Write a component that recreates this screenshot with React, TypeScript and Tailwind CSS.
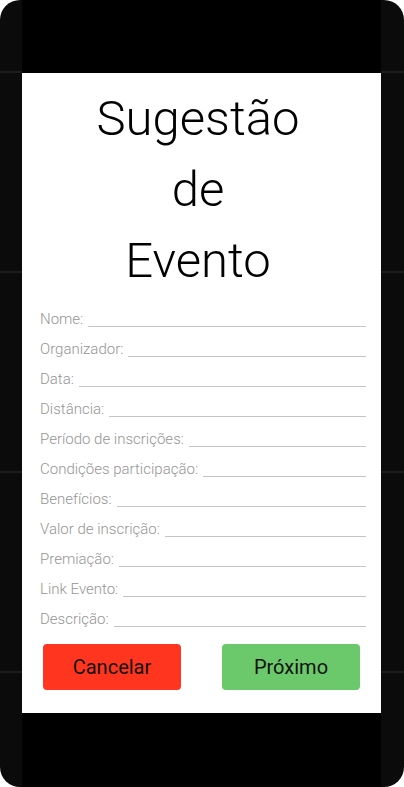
import React from 'react';

const fields = [
  'Nome:',
  'Organizador:',
  'Data:',
  'Distância:',
  'Período de inscrições:',
  'Condições participação:',
  'Benefícios:',
  'Valor de inscrição:',
  'Premiação:',
  'Link Evento:',
  'Descrição:',
];

const App = () => {
  return (
    <div className="w-[404px] h-[787px] overflow-hidden rounded-[20px] bg-[repeating-linear-gradient(to_bottom,#0b0b0b_0px,#0b0b0b_71px,#1c1c1c_71px,#1c1c1c_73px,#0b0b0b_73px,#0b0b0b_200px)] font-['Roboto',sans-serif]">
      <div className="ml-[22px] w-[359px] h-full bg-black flex flex-col">
        <div className="h-[73px]" />

        <div className="h-[640px] bg-white flex flex-col">
          {/* Title */}
          <div className="mt-[10px] pr-[7px] flex justify-center">
            <h1 className="w-min text-center text-[49px] leading-[71px] font-light text-black">
              Sugestão de Evento
            </h1>
          </div>

          {/* Form fields */}
          <div className="mt-[2px] pl-[18px] pr-[15px] flex flex-col">
            {fields.map((label) => (
              <div key={label} className="h-[30px] flex items-end">
                <span className="text-[15px] leading-[18px] font-light text-[#959595] whitespace-nowrap">
                  {label}
                </span>
                <div className="flex-1 ml-[5px] mb-[1px] h-px bg-[#c4c4c4]" />
              </div>
            ))}
          </div>

          {/* Buttons */}
          <div className="mt-[16px] px-[21px] flex justify-between">
            <button className="w-[138px] h-[46px] rounded-[4px] bg-[#ff351f] text-[20px] text-[#111111]">
              Cancelar
            </button>
            <button className="w-[138px] h-[46px] rounded-[4px] bg-[#6bc96c] text-[20px] text-[#111111]">
              Próximo
            </button>
          </div>
        </div>

        <div className="flex-1" />
      </div>
    </div>
  );
};

export default App;
